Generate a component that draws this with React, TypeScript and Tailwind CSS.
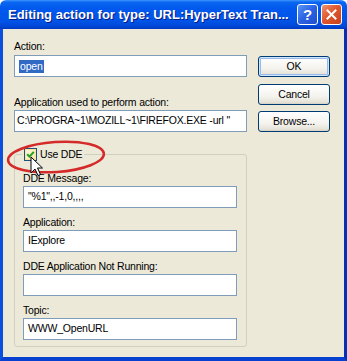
import React from "react";

function Label({ children, className = "" }: { children: React.ReactNode; className?: string }) {
  return (
    <div className={`h-[13px] leading-[13px] text-[10.5px] tracking-[-0.2px] text-black whitespace-nowrap ${className}`}>
      {children}
    </div>
  );
}

function TextBox({ children, className = "" }: { children?: React.ReactNode; className?: string }) {
  return (
    <div
      className={`h-[22px] border border-[#7F9DB9] bg-white flex items-center text-[10.5px] tracking-[-0.2px] text-black whitespace-nowrap overflow-hidden ${className}`}
    >
      {children}
    </div>
  );
}

function XPButton({ children, isDefault = false, className = "" }: { children: React.ReactNode; isDefault?: boolean; className?: string }) {
  return (
    <div
      className={`h-[21px] w-[72px] rounded-[3px] border border-[#003C74] bg-[linear-gradient(to_bottom,#FFFFFF_0%,#F4F3EE_60%,#E6E3D8_90%,#D6D0C5_100%)] flex items-center justify-center text-[10.5px] tracking-[-0.2px] text-black ${
        isDefault ? "shadow-[inset_0_0_0_1px_#CEE7FF,inset_0_0_0_2px_#9BB8EC]" : ""
      } ${className}`}
    >
      {children}
    </div>
  );
}

export default function App() {
  return (
    <div className="relative w-[347px] h-[361px] flex flex-col bg-white font-['Liberation_Sans',Arial,sans-serif] overflow-hidden">
      {/* Title bar */}
      <div className="h-[29px] flex items-center pl-[8px] pr-[5px] rounded-t-[6px] bg-[linear-gradient(to_bottom,#3D95FF_0%,#0A66F0_8%,#0058EE_30%,#0055E8_70%,#0048D8_90%,#0039C0_100%)]">
        <div className="flex-1 text-white font-bold text-[13px] leading-[16px] whitespace-nowrap [text-shadow:1px_1px_0_#0A1883] pt-[1px]">
          Editing action for type: URL:HyperText Tran...
        </div>
        <div className="flex items-center gap-[3px]">
          <div className="w-[21px] h-[21px] rounded-[3px] border border-white bg-[linear-gradient(135deg,#5A95F7_0%,#2A62E2_50%,#1D4FD0_100%)] flex items-center justify-center text-white font-bold text-[15px] leading-none">
            ?
          </div>
          <div className="w-[21px] h-[21px] rounded-[3px] border border-white bg-[linear-gradient(135deg,#EE9372_0%,#E0582F_45%,#C8401C_100%)] flex items-center justify-center">
            <svg width="11" height="11" viewBox="0 0 11 11">
              <path d="M1.5 1.5 L9.5 9.5 M9.5 1.5 L1.5 9.5" stroke="white" strokeWidth="2" strokeLinecap="square" />
            </svg>
          </div>
        </div>
      </div>

      {/* Body */}
      <div className="flex-1 flex flex-col bg-[#ECE9D8] border-l-[3px] border-r-[3px] border-b-[4px] border-l-[#0A50DC] border-r-[#0530B4] border-b-[#0840D0]">
        <div className="flex pl-[11px] pt-[11px]">
          <div className="w-[233px] flex flex-col">
            <Label>Action:</Label>
            <TextBox className="mt-[2px] pl-[4px]">
              <span className="bg-[#316AC5] text-white px-[1px] leading-[13px]">open</span>
            </TextBox>
            <Label className="mt-[19px]">Application used to perform action:</Label>
            <TextBox className="mt-[1px] pl-[2px]">C:\PROGRA~1\MOZILL~1\FIREFOX.EXE -url "</TextBox>
          </div>
          <div className="ml-[11px] w-[72px] flex flex-col pt-[16px]">
            <XPButton isDefault>OK</XPButton>
            <XPButton className="mt-[7px]">Cancel</XPButton>
            <XPButton className="mt-[6px]">Browse...</XPButton>
          </div>
        </div>

        <div className="pl-[11px] mt-[16px]">
          <fieldset className="w-[233px] border border-[#D0D0BF] rounded-[3px] pl-[8px] pr-[9px] pb-[6px]">
            <legend className="ml-[-1px] px-[2px] flex items-center h-[13px]">
              <span className="w-[13px] h-[13px] border border-[#1C5180] bg-[linear-gradient(135deg,#FFF6DA,#F2E7A6)] shadow-[inset_0_0_0_1px_#FCE4A0] flex items-center justify-center">
                <svg width="9" height="9" viewBox="0 0 9 9">
                  <path d="M1.2 4.2 L3.5 6.6 L7.8 1.8" stroke="#21A121" strokeWidth="2" fill="none" />
                </svg>
              </span>
              <span className="ml-[3px] text-[10.5px] tracking-[-0.2px] leading-[13px] text-black">Use DDE</span>
            </legend>
            <div className="flex flex-col pt-[11px]">
              <Label>DDE Message:</Label>
              <TextBox className="mt-[1px] pl-[4px]">"%1",,-1,0,,,,</TextBox>
              <Label className="mt-[8px]">Application:</Label>
              <TextBox className="mt-[1px] pl-[4px]">IExplore</TextBox>
              <Label className="mt-[8px]">DDE Application Not Running:</Label>
              <TextBox className="mt-[1px] pl-[4px]" />
              <Label className="mt-[8px]">Topic:</Label>
              <TextBox className="mt-[1px] pl-[4px]">WWW_OpenURL</TextBox>
            </div>
          </fieldset>
        </div>
      </div>

      {/* Red ellipse annotation and mouse cursor overlay */}
      <svg className="absolute left-0 top-0 pointer-events-none" width="347" height="361" viewBox="0 0 347 361">
        <ellipse cx="56" cy="157" rx="48" ry="15" fill="none" stroke="#D42A2A" strokeWidth="2.5" transform="rotate(-4 56 157)" />
        <path d="M31 157 L31 173 L35 169 L38 175.5 L40.5 174.5 L37.5 168 L42.5 168 Z" fill="white" stroke="black" strokeWidth="1" strokeLinejoin="miter" />
      </svg>
    </div>
  );
}
